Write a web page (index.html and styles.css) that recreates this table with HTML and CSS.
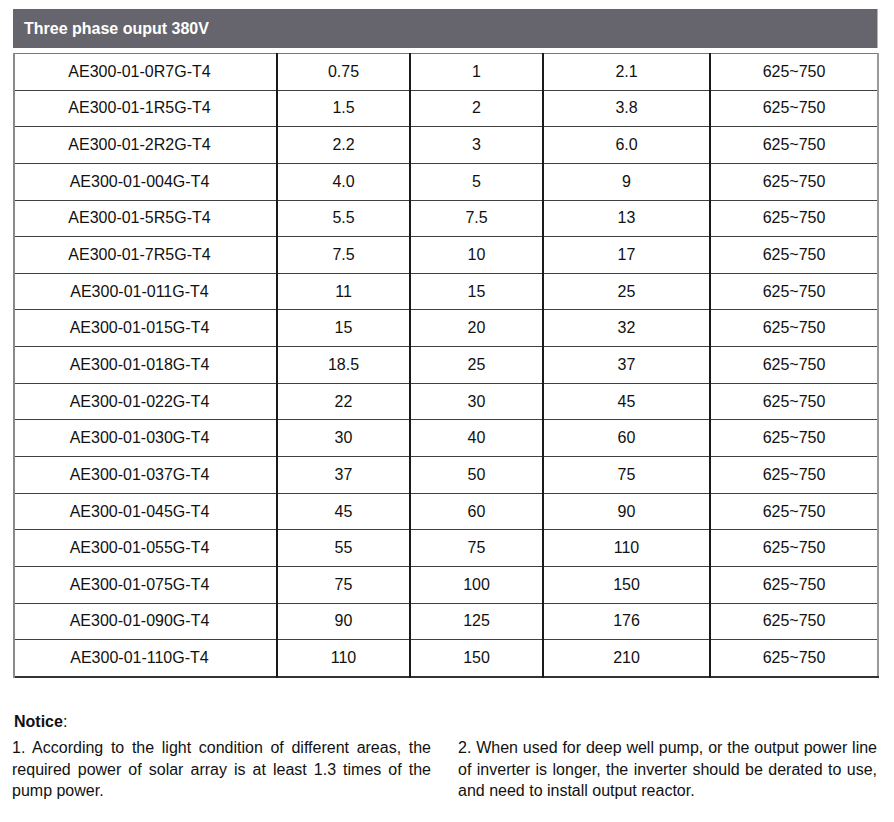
FILE: index.html
```html
<!DOCTYPE html>
<html>
<head>
<meta charset="utf-8">
<link rel="stylesheet" href="styles.css">
</head>
<body>
<div class="page">
  <div class="title-bar">Three phase ouput 380V</div>
  <table class="spec">
    <colgroup>
      <col class="c1"><col class="c2"><col class="c3"><col class="c4"><col class="c5">
    </colgroup>
    <tbody>
      <tr><td class="model">AE300-01-0R7G-T4</td><td>0.75</td><td>1</td><td>2.1</td><td>625~750</td></tr>
      <tr><td class="model">AE300-01-1R5G-T4</td><td>1.5</td><td>2</td><td>3.8</td><td>625~750</td></tr>
      <tr><td class="model">AE300-01-2R2G-T4</td><td>2.2</td><td>3</td><td>6.0</td><td>625~750</td></tr>
      <tr><td class="model">AE300-01-004G-T4</td><td>4.0</td><td>5</td><td>9</td><td>625~750</td></tr>
      <tr><td class="model">AE300-01-5R5G-T4</td><td>5.5</td><td>7.5</td><td>13</td><td>625~750</td></tr>
      <tr><td class="model">AE300-01-7R5G-T4</td><td>7.5</td><td>10</td><td>17</td><td>625~750</td></tr>
      <tr><td class="model">AE300-01-011G-T4</td><td>11</td><td>15</td><td>25</td><td>625~750</td></tr>
      <tr><td class="model">AE300-01-015G-T4</td><td>15</td><td>20</td><td>32</td><td>625~750</td></tr>
      <tr><td class="model">AE300-01-018G-T4</td><td>18.5</td><td>25</td><td>37</td><td>625~750</td></tr>
      <tr><td class="model">AE300-01-022G-T4</td><td>22</td><td>30</td><td>45</td><td>625~750</td></tr>
      <tr><td class="model">AE300-01-030G-T4</td><td>30</td><td>40</td><td>60</td><td>625~750</td></tr>
      <tr><td class="model">AE300-01-037G-T4</td><td>37</td><td>50</td><td>75</td><td>625~750</td></tr>
      <tr><td class="model">AE300-01-045G-T4</td><td>45</td><td>60</td><td>90</td><td>625~750</td></tr>
      <tr><td class="model">AE300-01-055G-T4</td><td>55</td><td>75</td><td>110</td><td>625~750</td></tr>
      <tr><td class="model">AE300-01-075G-T4</td><td>75</td><td>100</td><td>150</td><td>625~750</td></tr>
      <tr><td class="model">AE300-01-090G-T4</td><td>90</td><td>125</td><td>176</td><td>625~750</td></tr>
      <tr><td class="model">AE300-01-110G-T4</td><td>110</td><td>150</td><td>210</td><td>625~750</td></tr>
    </tbody>
  </table>
  <div class="notice">
    <div class="notice-title"><b>Notice</b>:</div>
    <div class="notice-cols">
      <p class="note">1. According to the light condition of different areas, the required power of solar array is at least 1.3 times of the pump power.</p>
      <p class="note">2. When used for deep well pump, or the output power line of inverter is longer, the inverter should be derated to use, and need to install output reactor.</p>
    </div>
  </div>
</div>
</body>
</html>
```

FILE: styles.css
```css
html, body {
  margin: 0;
  padding: 0;
  background: #ffffff;
}

body {
  font-family: "Liberation Sans", Arial, sans-serif;
  color: #111111;
  font-size: 16px;
}

.page {
  padding: 9px 16px 0 13px;
  width: 865px;
}

.title-bar {
  height: 39px;
  line-height: 40px;
  background: #66656d;
  color: #ffffff;
  font-weight: bold;
  font-size: 16px;
  padding-left: 11px;
  border-right: 1px solid #b4b4b8;
  box-sizing: border-box;
}

.spec {
  margin-top: 5px;
  width: 864px;
  border-collapse: collapse;
  table-layout: fixed;
  border-top: 1px solid #7a7a7a;
  border-left: 2px solid #8a8a8a;
  border-right: 2px solid #9a9a9a;
  border-bottom: 2px solid #333333;
}

.c1 { width: 263px; }
.c2 { width: 133px; }
.c3 { width: 133px; }
.c4 { width: 167px; }
.c5 { width: 168px; }

.spec td {
  height: 35.65px;
  padding: 0;
  text-align: center;
  vertical-align: middle;
  border-top: 1px solid #404040;
  border-left: 2px solid #1a1a1a;
  line-height: 18px;
}

.spec tr:first-child td {
  border-top: 1px solid #7a7a7a;
}

.spec td:first-child {
  border-left: 2px solid #8a8a8a;
}

.spec td.model {
  padding-right: 12px;
}

.notice {
  margin-top: 33px;
  line-height: 21.5px;
}

.notice-title {
  padding-left: 1px;
}

.notice-cols {
  display: grid;
  grid-template-columns: 419px 419px;
  column-gap: 27px;
  margin-left: -1px;
  margin-top: 5px;
}

.note {
  margin: 0;
  text-align: justify;
}
```
